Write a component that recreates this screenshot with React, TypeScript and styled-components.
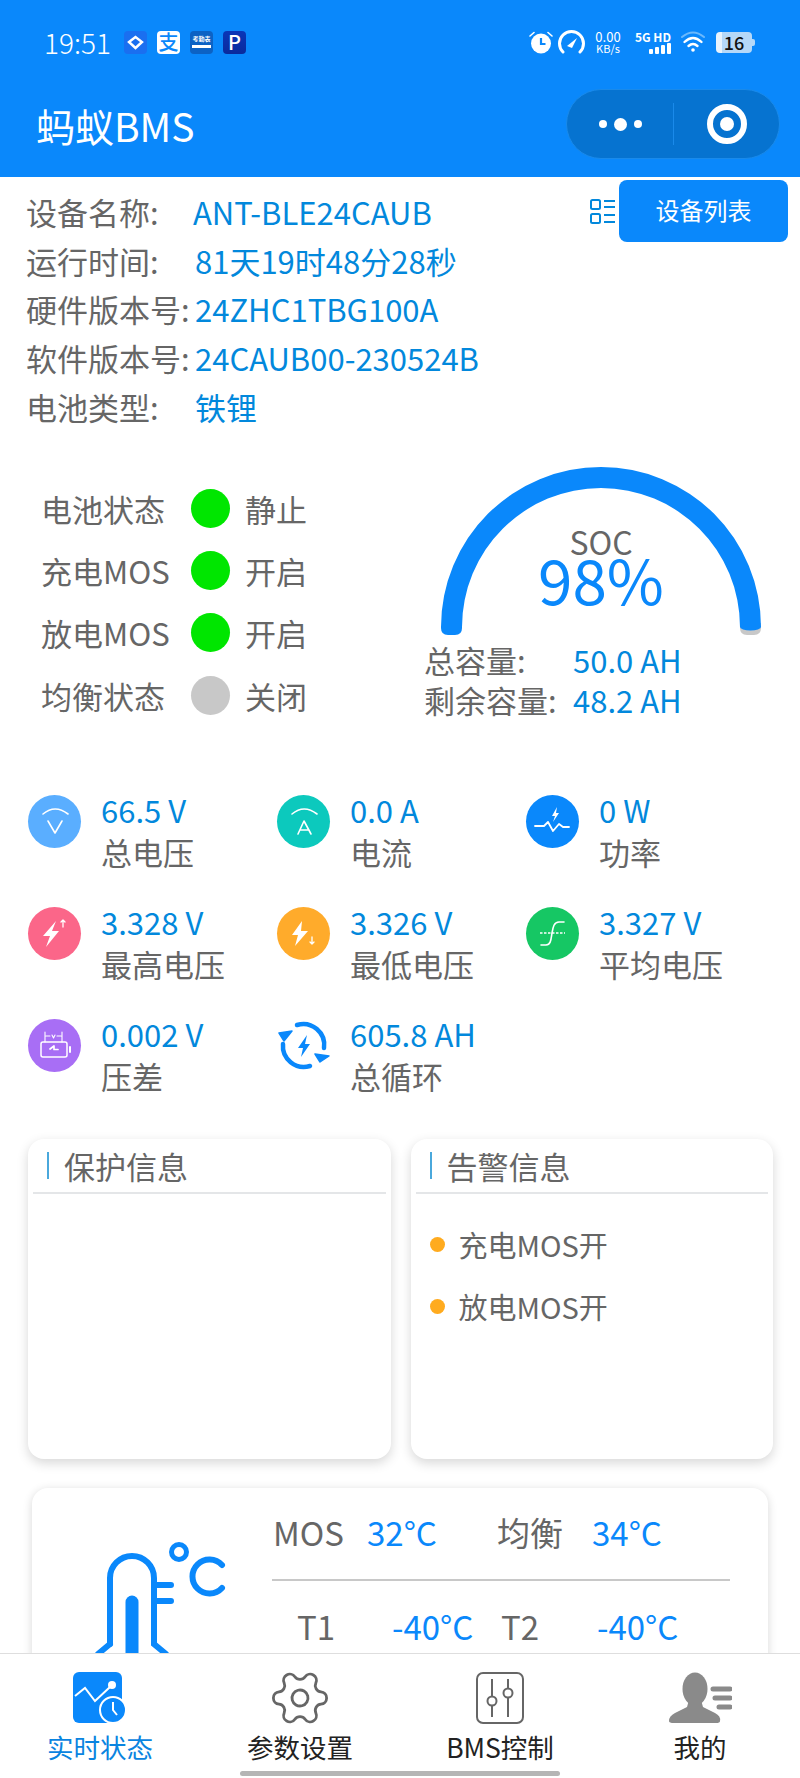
import styled, { createGlobalStyle } from 'styled-components';
import { Settings } from 'lucide-react';

const BLUE = '#0a88fb';
const VALUE = '#0288dc';
const TEXT = '#666';

const GlobalStyle = createGlobalStyle`
  html, body {
    margin: 0;
    padding: 0;
    background: #fff;
  }
  * {
    box-sizing: border-box;
  }
  body {
    font-family: "Noto Sans CJK SC", "Noto Sans", sans-serif;
  }
`;

const Page = styled.div`
  position: relative;
  width: 800px;
  height: 1778px;
  overflow: hidden;
  background: #fff;
`;

const Header = styled.header`
  height: 177px;
  background: ${BLUE};
  color: #fff;
`;

const StatusBar = styled.div`
  display: flex;
  align-items: center;
  height: 84px;
  padding: 0 48px 0 44px;
`;

const Clock = styled.span`
  font-size: 28px;
  font-weight: 300;
  line-height: 1;
  margin-right: 13px;
`;

const NotifyIcons = styled.div`
  display: flex;
  gap: 10px;
`;

const NotifyIcon = styled.span<{ $bg: string; $color?: string; $size?: number }>`
  display: flex;
  flex-direction: column;
  align-items: center;
  justify-content: center;
  width: 23px;
  height: 23px;
  border-radius: 4px;
  background: ${(p) => p.$bg};
  color: ${(p) => p.$color || '#fff'};
  font-size: ${(p) => p.$size || 18}px;
  line-height: 1;
  font-weight: 500;
`;

const TinyLabel = styled.span`
  font-size: 6px;
  line-height: 1;
  font-weight: 700;
  white-space: nowrap;
`;

const TinyStrip = styled.i`
  display: block;
  width: 19px;
  height: 3px;
  margin-top: 3px;
  background: #fff;
`;

const SystemIcons = styled.div`
  display: flex;
  align-items: center;
  margin-left: auto;
`;

const NetSpeed = styled.div`
  display: flex;
  flex-direction: column;
  align-items: center;
  width: 30px;
  margin: 0 10px 0 8px;
  font-size: 13px;
  line-height: 13px;
`;

const NetUnit = styled.span`
  font-size: 11px;
  line-height: 11px;
`;

const SignalBox = styled.div`
  display: flex;
  flex-direction: column;
  align-items: flex-end;
  width: 38px;
  margin-right: 10px;
`;

const SignalText = styled.div`
  font-size: 12px;
  line-height: 13px;
  font-weight: 700;
  white-space: nowrap;
`;

const SignalBars = styled.div`
  display: flex;
  align-items: flex-end;
  gap: 2px;
  height: 11px;
`;

const SignalBar = styled.i<{ $h: number }>`
  display: block;
  width: 4px;
  height: ${(p) => p.$h}px;
  border-radius: 1px;
  background: #fff;
`;

const Battery = styled.div`
  display: flex;
  align-items: center;
  justify-content: center;
  position: relative;
  width: 36px;
  height: 21px;
  margin-left: 11px;
  border-radius: 4px;
  color: #111;
  font-size: 18px;
  font-weight: 500;
  line-height: 1;
  background: linear-gradient(90deg, #e8f3fd 0 16%, #b5d8f8 16% 100%);
`;

const BatteryTip = styled.i`
  position: absolute;
  right: -3px;
  top: 7px;
  width: 3px;
  height: 7px;
  border-radius: 0 2px 2px 0;
  background: #b5d8f8;
`;

const TitleBar = styled.div`
  display: flex;
  align-items: center;
  justify-content: space-between;
  height: 80px;
  padding: 0 20px 0 36px;
`;

const Title = styled.h1`
  margin: 3px 0 0;
  font-size: 39px;
  font-weight: 400;
  line-height: 1;
`;

const Capsule = styled.div`
  display: flex;
  align-items: center;
  width: 214px;
  height: 70px;
  border-radius: 35px;
  background: #0673d0;
  border: 1px solid #1a8aea;
`;

const CapsulePart = styled.div<{ $width: number }>`
  display: flex;
  align-items: center;
  justify-content: center;
  gap: 7px;
  width: ${(p) => p.$width}px;
  height: 42px;
`;

const CapsuleDivider = styled.div`
  width: 1px;
  height: 42px;
  background: #1a8aea;
`;

const MenuDot = styled.i<{ $size: number }>`
  display: block;
  width: ${(p) => p.$size}px;
  height: ${(p) => p.$size}px;
  border-radius: 50%;
  background: #fff;
`;

const InfoSection = styled.section`
  display: flex;
  justify-content: space-between;
  padding: 3px 12px 0 26px;
`;

const InfoRows = styled.div`
  padding-top: 7px;
`;

const InfoLabel = styled.span`
  width: 169px;
  color: ${TEXT};
  white-space: nowrap;
`;

const InfoRow = styled.div`
  display: flex;
  align-items: center;
  height: 48.75px;
  font-size: 31px;
  line-height: 1;

  &:first-child ${InfoLabel} {
    width: 167px;
  }
`;

const InfoValue = styled.span`
  color: ${VALUE};
  white-space: nowrap;
`;

const DeviceActions = styled.div`
  display: flex;
  align-items: center;
  gap: 4px;
  align-self: flex-start;
`;

const DeviceButton = styled.button`
  width: 169px;
  height: 62px;
  padding: 0 0 3px;
  border: 0;
  border-radius: 8px;
  background: ${BLUE};
  color: #fff;
  font-family: inherit;
  font-size: 24px;
`;

const SummarySection = styled.section`
  display: flex;
  margin-top: 36px;
`;

const StateList = styled.div`
  width: 424px;
  padding: 10.5px 0 0 41px;
`;

const StateRow = styled.div`
  display: flex;
  align-items: center;
  height: 62.3px;
  font-size: 31px;
  line-height: 1;
  color: ${TEXT};
`;

const StateLabel = styled.span`
  width: 150px;
  white-space: nowrap;
`;

const StateDot = styled.i<{ $on: boolean }>`
  display: block;
  width: 39px;
  height: 39px;
  margin-right: 15px;
  border-radius: 50%;
  background: ${(p) => (p.$on ? '#00e600' : '#c8c8c8')};
`;

const GaugeColumn = styled.div`
  width: 376px;
`;

const GaugeBox = styled.div`
  position: relative;
  width: 320px;
  height: 168px;
  margin: 0 0 5px 17px;
`;

const GaugeText = styled.div`
  position: absolute;
  left: 0;
  right: 0;
  top: 58px;
  text-align: center;
`;

const GaugeName = styled.div`
  font-size: 32px;
  line-height: 32px;
  color: ${TEXT};
`;

const GaugeValue = styled.div`
  font-size: 62px;
  line-height: 42px;
  color: ${BLUE};
`;

const CapacityRow = styled.div`
  display: flex;
  align-items: center;
  height: 40px;
  font-size: 31px;
  line-height: 1;
`;

const CapacityLabel = styled.span`
  width: 149px;
  color: ${TEXT};
  white-space: nowrap;
`;

const MetricGrid = styled.section`
  display: grid;
  grid-template-columns: repeat(3, 249px);
  grid-auto-rows: 112px;
  margin-top: 65px;
  padding-left: 28px;
`;

const Metric = styled.div`
  display: flex;
  gap: 20px;
`;

const MetricIcon = styled.div<{ $bg: string }>`
  flex: none;
  width: 53px;
  height: 53px;
  margin-top: 4px;
  border-radius: 50%;
  background: ${(p) => p.$bg};
`;

const MetricValue = styled.div`
  font-size: 31px;
  line-height: 38px;
  color: ${VALUE};
  white-space: nowrap;
`;

const MetricLabel = styled.div`
  margin-top: 4px;
  font-size: 31px;
  line-height: 38px;
  color: ${TEXT};
  white-space: nowrap;
`;

const Cards = styled.section`
  display: flex;
  gap: 20px;
  margin-top: 12px;
  padding: 0 27px 0 28px;
`;

const Card = styled.div`
  flex: 1;
  height: 320px;
  padding: 0 5px;
  border-radius: 16px;
  background: #fff;
  box-shadow: 0 4px 12px rgba(0, 0, 0, 0.16);
`;

const CardHead = styled.div`
  display: flex;
  align-items: center;
  height: 55px;
  padding: 0 0 0 14px;
  border-bottom: 2px solid #e4e6e8;
`;

const CardAccent = styled.i`
  display: block;
  width: 2px;
  height: 27px;
  margin-right: 15px;
  background: #4aa8dc;
`;

const CardTitle = styled.h2`
  margin: 0;
  font-size: 31px;
  font-weight: 400;
  line-height: 1;
  color: ${TEXT};
`;

const AlertList = styled.div`
  padding: 19px 0 0 14px;
`;

const AlertRow = styled.div`
  display: flex;
  align-items: center;
  height: 62px;
  font-size: 29px;
  line-height: 1;
  color: ${TEXT};
`;

const AlertDot = styled.i`
  display: block;
  width: 15px;
  height: 15px;
  margin-right: 14px;
  border-radius: 50%;
  background: #ffab1f;
`;

const TempCard = styled.section`
  display: flex;
  height: 320px;
  margin: 29px 32px 0;
  border-radius: 16px;
  background: #fff;
  box-shadow: 0 2px 10px rgba(0, 0, 0, 0.16);
`;

const TempIcon = styled.div`
  flex: none;
  width: 240px;
  padding: 46px 0 0 58px;
`;

const TempTable = styled.div`
  width: 458px;
  padding-top: 24px;
`;

const TempRow = styled.div<{ $columns: string; $indent: number }>`
  display: grid;
  grid-template-columns: ${(p) => p.$columns};
  padding-left: ${(p) => p.$indent}px;
  font-size: 33px;
  line-height: 40px;
  white-space: nowrap;
`;

const TempName = styled.span`
  color: ${TEXT};
`;

const TempValue = styled.span`
  color: ${BLUE};
`;

const TempDivider = styled.div`
  height: 2px;
  margin: 27px 0 25px;
  background: #c8c8c8;
`;

const TabBar = styled.nav`
  position: absolute;
  left: 0;
  right: 0;
  bottom: 0;
  display: grid;
  grid-template-columns: repeat(4, 200px);
  height: 125px;
  padding-top: 18px;
  background: #fff;
  border-top: 1px solid #dedede;
`;

const Tab = styled.div<{ $active?: boolean }>`
  display: flex;
  flex-direction: column;
  align-items: center;
  color: ${(p) => (p.$active ? '#0a84e0' : '#222')};
`;

const TabIconBox = styled.div`
  display: flex;
  align-items: center;
  justify-content: center;
  height: 52px;
  color: #666;
`;

const GearIcon = styled(Settings)`
  transform: rotate(30deg);
`;

const TabLabel = styled.span`
  margin-top: 5px;
  font-size: 26.5px;
  line-height: 36px;
  white-space: nowrap;
`;

const HomeBar = styled.i`
  position: absolute;
  left: 240px;
  bottom: 2px;
  width: 320px;
  height: 5px;
  border-radius: 3px;
  background: #b5b5b5;
`;

const lineProps = {
  fill: 'none',
  stroke: '#fff',
  strokeLinecap: 'round' as const,
  strokeLinejoin: 'round' as const,
};

const VoltIcon = () => (
  <svg width="53" height="53" viewBox="0 0 53 53" {...lineProps} strokeWidth="1.6">
    <path d="M15 19Q27 9 40 19" />
    <path d="M20 26L27 38L34 26" />
  </svg>
);

const AmpIcon = () => (
  <svg width="53" height="53" viewBox="0 0 53 53" {...lineProps} strokeWidth="1.6">
    <path d="M15 19Q27 9 40 19" />
    <path d="M21 39L27 26L34 39M23 35H32" />
  </svg>
);

const PowerIcon = () => (
  <svg width="53" height="53" viewBox="0 0 53 53">
    <path d="M9 31H18L22 27L27 36L33 29L37 32H43" {...lineProps} strokeWidth="1.8" />
    <path d="M31 12L26 21H29L27 27L33 18H30Z" fill="#fff" />
  </svg>
);

const HighIcon = () => (
  <svg width="53" height="53" viewBox="0 0 53 53">
    <path d="M28 14L15 29H22L18 40L31 24H24Z" fill="#fff" />
    <path d="M35 20V13M33 15L35 13L37 15" {...lineProps} strokeWidth="1.3" />
  </svg>
);

const LowIcon = () => (
  <svg width="53" height="53" viewBox="0 0 53 53">
    <path d="M25 14L15 28H21L18 39L31 24H24Z" fill="#fff" />
    <path d="M35 30V37M33 35L35 37L37 35" {...lineProps} strokeWidth="1.3" />
  </svg>
);

const AverageIcon = () => (
  <svg width="53" height="53" viewBox="0 0 53 53" {...lineProps} strokeWidth="1.6">
    <path d="M15 38H20C25 38 25 32 26 26C27 20 28 15 33 15H38" />
    <path d="M14 26H39" strokeDasharray="2.5 1.5" strokeLinecap="butt" />
  </svg>
);

const DiffIcon = () => (
  <svg width="53" height="53" viewBox="0 0 53 53" {...lineProps} strokeWidth="1.5">
    <rect x="13" y="23" width="26" height="15" rx="2" />
    <path d="M42 28V33" strokeWidth="2" />
    <path d="M17 13V23M34 13V23M18 17H22M29 17H33M24 16L25.5 19L27 16" strokeWidth="1.1" />
    <path d="M22 30L26 27V30.5L30 30.5" strokeWidth="1.7" />
  </svg>
);

const CycleIcon = () => (
  <svg width="53" height="53" viewBox="0 0 53 53">
    <path d="M20 6A21 21 0 0 1 47 29" fill="none" stroke={BLUE} strokeWidth="4.5" strokeLinecap="round" />
    <path d="M33 47A21 21 0 0 1 6 25" fill="none" stroke={BLUE} strokeWidth="4.5" strokeLinecap="round" />
    <path d="M38 35L52 37L43 43Z" fill={BLUE} stroke={BLUE} strokeWidth="1.5" strokeLinejoin="round" />
    <path d="M2 14L15 12L7 22Z" fill={BLUE} stroke={BLUE} strokeWidth="1.5" strokeLinejoin="round" />
    <path d="M30 16L21 29H26L24 38L33 25H28Z" fill={BLUE} />
  </svg>
);

const AlarmIcon = () => (
  <svg width="24" height="24" viewBox="0 0 24 24">
    <circle cx="12" cy="13.5" r="10" fill="#fff" />
    <path d="M12 8V14H16.5" fill="none" stroke={BLUE} strokeWidth="2.2" />
    <path d="M1 6L5 2.5M23 6L19 2.5" stroke="#fff" strokeWidth="1.6" strokeLinecap="round" />
  </svg>
);

const SpeedIcon = () => (
  <svg width="27" height="24" viewBox="0 0 27 24" style={{ marginLeft: 5 }}>
    <path d="M5 22A12 12 0 1 1 22 22" fill="none" stroke="#fff" strokeWidth="3" strokeLinecap="round" />
    <path d="M9 16L19 8L14 18Z" fill="#fff" />
  </svg>
);

const WifiIcon = () => (
  <svg width="24" height="22" viewBox="0 0 24 22" fill="none" stroke="#fff" strokeLinecap="round">
    <path d="M1 6Q12 -3 23 6" stroke="#6bb8fb" strokeWidth="2" />
    <path d="M3.5 11Q12 3 20.5 11" strokeWidth="2.4" />
    <path d="M7.5 15Q12 11 16.5 15" strokeWidth="2.4" />
    <circle cx="12" cy="19" r="1.8" fill="#fff" stroke="none" />
  </svg>
);

const CameraRing = () => (
  <svg width="40" height="40" viewBox="0 0 40 40">
    <circle cx="20" cy="20" r="17" fill="none" stroke="#fff" strokeWidth="6" />
    <circle cx="20" cy="20" r="7" fill="#fff" />
  </svg>
);

const ListIcon = () => (
  <svg width="25" height="25" viewBox="0 0 25 25" fill="none" stroke={VALUE} strokeWidth="2">
    <rect x="1" y="1" width="9" height="9" rx="1.5" />
    <rect x="1" y="15" width="9" height="9" rx="1.5" />
    <path d="M14 2H25M14 8H25M14 16H25M14 23H25" />
  </svg>
);

const Gauge = () => (
  <svg width="320" height="168" viewBox="0 0 320 168">
    <path d="M299 156V161Q299 168 306 168H313Q320 168 320 161V156Z" fill="#c8c8c8" />
    <path
      d="M0 160V161Q0 168 7 168H14Q21 168 21 161V160A139 139 0 0 1 299 160A10.5 3.5 0 0 0 320 160A160 160 0 0 0 0 160Z"
      fill={BLUE}
    />
  </svg>
);

const Thermometer = () => (
  <svg width="140" height="140" viewBox="0 0 140 140" fill="none" stroke={BLUE} strokeLinecap="round">
    <path d="M20 110V44A22 22 0 0 1 64 44V110L76 120" strokeWidth="6" />
    <path d="M20 110L8 120" strokeWidth="6" />
    <path d="M42 68V130" strokeWidth="13" />
    <path d="M65 51H81M65 67H81" strokeWidth="6" />
    <circle cx="89" cy="18" r="7.5" strokeWidth="5" />
    <path d="M132 31A17 17 0 1 0 132 54" strokeWidth="6" />
  </svg>
);

const RealtimeIcon = () => (
  <svg width="54" height="52" viewBox="0 0 54 52">
    <rect x="0" y="0" width="49" height="51" rx="6" fill={BLUE} />
    <path d="M2 24L12 16L22 29L37 15" fill="none" stroke="#fff" strokeWidth="2" />
    <circle cx="39" cy="13" r="4" fill="#fff" />
    <circle cx="40" cy="38" r="13" fill={BLUE} stroke="#fff" strokeWidth="2" />
    <path d="M40 30V38L44 43" fill="none" stroke="#fff" strokeWidth="2" />
  </svg>
);

const ControlIcon = () => (
  <svg width="48" height="52" viewBox="0 0 48 52" fill="none" stroke="#666" strokeWidth="2">
    <rect x="1" y="1" width="46" height="50" rx="6" />
    <path d="M16 7V24M16 34V45M32 7V16M32 26V45" />
    <circle cx="16" cy="29" r="4.5" />
    <circle cx="32" cy="21" r="4.5" />
  </svg>
);

const ProfileIcon = () => (
  <svg width="63" height="52" viewBox="0 0 63 52" fill="#8a8a8a">
    <ellipse cx="26" cy="17" rx="12.5" ry="16.5" />
    <path d="M20 28H32L34 35L46 41Q52 44 51 49Q51 51 47 51H5Q0 51 0 49Q0 44 6 41L18 35Z" />
    <path d="M44 17H61M46 26H61M50 35H61" stroke="#8a8a8a" strokeWidth="5" strokeLinecap="round" />
  </svg>
);

const infoRows = [
  ['设备名称:', 'ANT-BLE24CAUB'],
  ['运行时间:', '81天19时48分28秒'],
  ['硬件版本号:', '24ZHC1TBG100A'],
  ['软件版本号:', '24CAUB00-230524B'],
  ['电池类型:', '铁锂'],
];

const states = [
  { label: '电池状态', on: true, text: '静止' },
  { label: '充电MOS', on: true, text: '开启' },
  { label: '放电MOS', on: true, text: '开启' },
  { label: '均衡状态', on: false, text: '关闭' },
];

const metrics = [
  { value: '66.5 V', label: '总电压', bg: '#5aaeff', icon: <VoltIcon /> },
  { value: '0.0 A', label: '电流', bg: '#0cc9bd', icon: <AmpIcon /> },
  { value: '0 W', label: '功率', bg: BLUE, icon: <PowerIcon /> },
  { value: '3.328 V', label: '最高电压', bg: '#fb6689', icon: <HighIcon /> },
  { value: '3.326 V', label: '最低电压', bg: '#ffab2b', icon: <LowIcon /> },
  { value: '3.327 V', label: '平均电压', bg: '#16c764', icon: <AverageIcon /> },
  { value: '0.002 V', label: '压差', bg: '#a86ef5', icon: <DiffIcon /> },
  { value: '605.8 AH', label: '总循环', bg: 'transparent', icon: <CycleIcon /> },
];

export default function App() {
  return (
    <Page>
      <GlobalStyle />
      <Header>
        <StatusBar>
          <Clock>19:51</Clock>
          <NotifyIcons>
            <NotifyIcon $bg="#1a6ff0">
              <svg width="17" height="15" viewBox="0 0 17 15" fill="none" stroke="#fff" strokeWidth="2.4">
                <path d="M2 7L8.5 2L15 7L8.5 13Z" />
              </svg>
            </NotifyIcon>
            <NotifyIcon $bg="#fff" $color={BLUE} $size={20}>支</NotifyIcon>
            <NotifyIcon $bg="#0c62c4">
              <TinyLabel>考勤表</TinyLabel>
              <TinyStrip />
            </NotifyIcon>
            <NotifyIcon $bg="linear-gradient(#0a36b8, #0a2a9c)" $size={20}>P</NotifyIcon>
          </NotifyIcons>
          <SystemIcons>
            <AlarmIcon />
            <SpeedIcon />
            <NetSpeed>
              <span>0.00</span>
              <NetUnit>KB/s</NetUnit>
            </NetSpeed>
            <SignalBox>
              <SignalText>5G HD</SignalText>
              <SignalBars>
                <SignalBar $h={5} />
                <SignalBar $h={7} />
                <SignalBar $h={9} />
                <SignalBar $h={11} />
              </SignalBars>
            </SignalBox>
            <WifiIcon />
            <Battery>
              16
              <BatteryTip />
            </Battery>
          </SystemIcons>
        </StatusBar>
        <TitleBar>
          <Title>蚂蚁BMS</Title>
          <Capsule>
            <CapsulePart $width={106}>
              <MenuDot $size={8} />
              <MenuDot $size={13} />
              <MenuDot $size={8} />
            </CapsulePart>
            <CapsuleDivider />
            <CapsulePart $width={105}>
              <CameraRing />
            </CapsulePart>
          </Capsule>
        </TitleBar>
      </Header>

      <InfoSection>
        <InfoRows>
          {infoRows.map(([label, value]) => (
            <InfoRow key={label}>
              <InfoLabel>{label}</InfoLabel>
              <InfoValue>{value}</InfoValue>
            </InfoRow>
          ))}
        </InfoRows>
        <DeviceActions>
          <ListIcon />
          <DeviceButton>设备列表</DeviceButton>
        </DeviceActions>
      </InfoSection>

      <SummarySection>
        <StateList>
          {states.map((s) => (
            <StateRow key={s.label}>
              <StateLabel>{s.label}</StateLabel>
              <StateDot $on={s.on} />
              <span>{s.text}</span>
            </StateRow>
          ))}
        </StateList>
        <GaugeColumn>
          <GaugeBox>
            <Gauge />
            <GaugeText>
              <GaugeName>SOC</GaugeName>
              <GaugeValue>98%</GaugeValue>
            </GaugeText>
          </GaugeBox>
          <CapacityRow>
            <CapacityLabel>总容量:</CapacityLabel>
            <InfoValue>50.0 AH</InfoValue>
          </CapacityRow>
          <CapacityRow>
            <CapacityLabel>剩余容量:</CapacityLabel>
            <InfoValue>48.2 AH</InfoValue>
          </CapacityRow>
        </GaugeColumn>
      </SummarySection>

      <MetricGrid>
        {metrics.map((m) => (
          <Metric key={m.label}>
            <MetricIcon $bg={m.bg}>{m.icon}</MetricIcon>
            <div>
              <MetricValue>{m.value}</MetricValue>
              <MetricLabel>{m.label}</MetricLabel>
            </div>
          </Metric>
        ))}
      </MetricGrid>

      <Cards>
        <Card>
          <CardHead>
            <CardAccent />
            <CardTitle>保护信息</CardTitle>
          </CardHead>
        </Card>
        <Card>
          <CardHead>
            <CardAccent />
            <CardTitle>告警信息</CardTitle>
          </CardHead>
          <AlertList>
            <AlertRow>
              <AlertDot />
              充电MOS开
            </AlertRow>
            <AlertRow>
              <AlertDot />
              放电MOS开
            </AlertRow>
          </AlertList>
        </Card>
      </Cards>

      <TempCard>
        <TempIcon>
          <Thermometer />
        </TempIcon>
        <TempTable>
          <TempRow $columns="94px 130px 95px auto" $indent={1}>
            <TempName>MOS</TempName>
            <TempValue>32°C</TempValue>
            <TempName>均衡</TempName>
            <TempValue>34°C</TempValue>
          </TempRow>
          <TempDivider />
          <TempRow $columns="95px 109px 96px auto" $indent={25}>
            <TempName>T1</TempName>
            <TempValue>-40°C</TempValue>
            <TempName>T2</TempName>
            <TempValue>-40°C</TempValue>
          </TempRow>
        </TempTable>
      </TempCard>

      <TabBar>
        <Tab $active>
          <TabIconBox>
            <RealtimeIcon />
          </TabIconBox>
          <TabLabel>实时状态</TabLabel>
        </Tab>
        <Tab>
          <TabIconBox>
            <GearIcon size={64} strokeWidth={1.05} />
          </TabIconBox>
          <TabLabel>参数设置</TabLabel>
        </Tab>
        <Tab>
          <TabIconBox>
            <ControlIcon />
          </TabIconBox>
          <TabLabel>BMS控制</TabLabel>
        </Tab>
        <Tab>
          <TabIconBox>
            <ProfileIcon />
          </TabIconBox>
          <TabLabel>我的</TabLabel>
        </Tab>
        <HomeBar />
      </TabBar>
    </Page>
  );
}
